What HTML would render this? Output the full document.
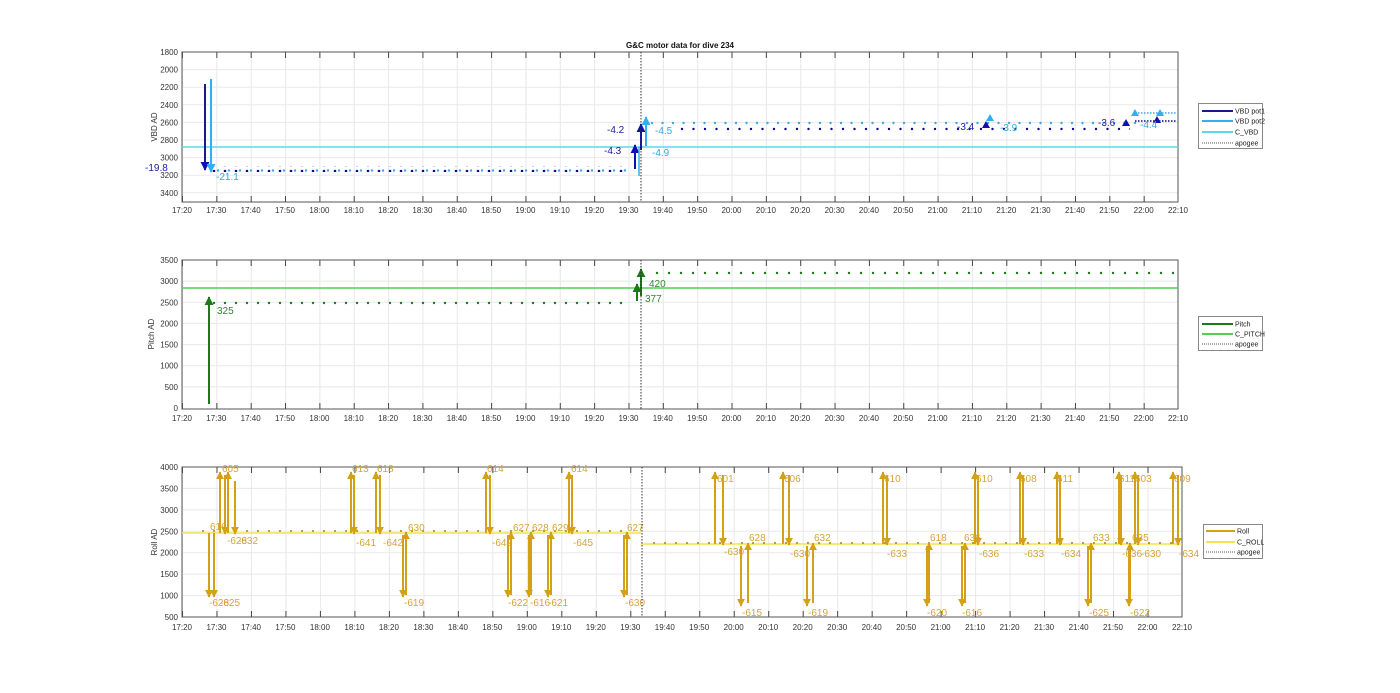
<!DOCTYPE html>
<html><head><meta charset="utf-8"><style>
html,body{margin:0;padding:0;background:#fff;}
svg{display:block;font-family:"Liberation Sans",sans-serif;}
.t{font-size:8px;fill:#333;}
.yl{font-size:8px;fill:#333;text-anchor:end;}
.xl{font-size:8px;fill:#333;text-anchor:middle;}
.g{font-size:10px;fill:#d4a43a;}
</style></head><body>
<svg width="1400" height="693" viewBox="0 0 1400 693">
<defs>
<pattern id="vg" x="182" y="0" width="34.345" height="10" patternUnits="userSpaceOnUse"><line x1="0.5" y1="0" x2="0.5" y2="10" stroke="#e8e8e8" stroke-width="1"/></pattern>
<pattern id="vt" x="182" y="0" width="34.345" height="10" patternUnits="userSpaceOnUse"><line x1="0.5" y1="0" x2="0.5" y2="10" stroke="#444" stroke-width="1"/></pattern>
<pattern id="vgb" x="182" y="0" width="34.483" height="10" patternUnits="userSpaceOnUse"><line x1="0.5" y1="0" x2="0.5" y2="10" stroke="#e8e8e8" stroke-width="1"/></pattern>
<pattern id="vtb" x="182" y="0" width="34.483" height="10" patternUnits="userSpaceOnUse"><line x1="0.5" y1="0" x2="0.5" y2="10" stroke="#444" stroke-width="1"/></pattern>
<pattern id="dn" x="212" y="0" width="11" height="6" patternUnits="userSpaceOnUse"><circle cx="2" cy="3" r="1.3" fill="#0a0a8a"/><circle cx="6" cy="2.5" r="1.2" fill="#3aa8e8"/></pattern>
<pattern id="dn2" x="650" y="0" width="10.5" height="6" patternUnits="userSpaceOnUse"><circle cx="2" cy="3" r="1.2" fill="#3aa8e8"/></pattern>
<pattern id="dn3" x="680" y="0" width="11.5" height="6" patternUnits="userSpaceOnUse"><circle cx="2" cy="3" r="1.2" fill="#0a0a8a"/></pattern>
<pattern id="dg" x="212" y="0" width="11" height="6" patternUnits="userSpaceOnUse"><circle cx="2" cy="3" r="1.2" fill="#1a7a1a"/></pattern>
<pattern id="dg2" x="655" y="0" width="12" height="6" patternUnits="userSpaceOnUse"><circle cx="2" cy="3" r="1.2" fill="#1a7a1a"/></pattern>
<pattern id="dy" x="212" y="0" width="11" height="6" patternUnits="userSpaceOnUse"><circle cx="2" cy="3" r="1.1" fill="#b89030"/></pattern>
<marker id="mg" viewBox="0 0 10 10" refX="9" refY="5" markerWidth="4" markerHeight="4" orient="auto"><path d="M0,0L10,5L0,10z" fill="#d4a017"/></marker>
<marker id="mgr" viewBox="0 0 10 10" refX="9" refY="5" markerWidth="4.5" markerHeight="4.5" orient="auto"><path d="M0,0L10,5L0,10z" fill="#1a7a1a"/></marker>
<marker id="mb" viewBox="0 0 10 10" refX="9" refY="5" markerWidth="4.5" markerHeight="4.5" orient="auto"><path d="M0,0L10,5L0,10z" fill="#1010b0"/></marker>
<marker id="mc" viewBox="0 0 10 10" refX="9" refY="5" markerWidth="4.5" markerHeight="4.5" orient="auto"><path d="M0,0L10,5L0,10z" fill="#30b0f0"/></marker>
</defs>

<!-- ===== TOP PLOT ===== -->
<text x="680" y="48" font-size="8" font-weight="bold" text-anchor="middle" fill="#111">G&amp;C motor data for dive 234</text>
<rect x="182" y="52" width="996" height="150" fill="url(#vg)"/>
<g stroke="#e8e8e8"><line x1="182" x2="1178" y1="69.6" y2="69.6"/><line x1="182" x2="1178" y1="87.2" y2="87.2"/><line x1="182" x2="1178" y1="104.8" y2="104.8"/><line x1="182" x2="1178" y1="122.4" y2="122.4"/><line x1="182" x2="1178" y1="140" y2="140"/><line x1="182" x2="1178" y1="157.6" y2="157.6"/><line x1="182" x2="1178" y1="175.2" y2="175.2"/><line x1="182" x2="1178" y1="192.8" y2="192.8"/></g>
<rect x="182" y="52" width="996" height="6" fill="url(#vt)"/>
<rect x="182" y="196" width="996" height="6" fill="url(#vt)"/>
<rect x="182" y="52" width="996" height="150" fill="none" stroke="#555" stroke-width="1"/>
<g class="yl"><text x="178" y="55">1800</text><text x="178" y="72.6">2000</text><text x="178" y="90.2">2200</text><text x="178" y="107.8">2400</text><text x="178" y="125.4">2600</text><text x="178" y="143">2800</text><text x="178" y="160.6">3000</text><text x="178" y="178.2">3200</text><text x="178" y="195.8">3400</text></g>
<text class="t" transform="translate(157,127) rotate(-90)" text-anchor="middle">VBD AD</text>
<line x1="182" x2="1178" y1="147" y2="147" stroke="#5ad8e8" stroke-width="1.5"/>
<rect x="212" y="166" width="415" height="6" fill="url(#dn)"/>
<rect x="650" y="119" width="490" height="6" fill="url(#dn2)"/>
<rect x="680" y="125" width="450" height="6" fill="url(#dn3)"/>
<line x1="1135" x2="1176" y1="121" y2="121" stroke="#0a0a8a" stroke-width="1.5" stroke-dasharray="1.5 1.5"/>
<line x1="1135" x2="1176" y1="113" y2="113" stroke="#3aa8e8" stroke-width="1.5" stroke-dasharray="1.5 1.5"/>
<path d="M986,121l-4,7h8z" fill="#1010b0"/><path d="M990,114l-4,7h8z" fill="#30b0f0"/>
<path d="M1126,119l-4,7h8z" fill="#1010b0"/><path d="M1135,109l-4,7h8z" fill="#30b0f0"/><path d="M1160,109l-4,7h8z" fill="#30b0f0"/><path d="M1157,116l-4,7h8z" fill="#1010b0"/>
<line x1="205" y1="84" x2="205" y2="170" stroke="#1a1a90" stroke-width="2" marker-end="url(#mb)"/>
<line x1="211" y1="79" x2="211" y2="172" stroke="#30b0f0" stroke-width="2" marker-end="url(#mc)"/>
<line x1="635" y1="169" x2="635" y2="145" stroke="#1010b0" stroke-width="2" marker-end="url(#mb)"/>
<line x1="641" y1="150" x2="641" y2="124" stroke="#1010b0" stroke-width="2" marker-end="url(#mb)"/>
<line x1="639" y1="176" x2="639" y2="147" stroke="#30b0f0" stroke-width="1.5"/>
<line x1="646" y1="146" x2="646" y2="117" stroke="#30b0f0" stroke-width="2" marker-end="url(#mc)"/>
<g font-size="10"><text x="145" y="171" fill="#2020a0">-19.8</text><text x="216" y="180" fill="#30a8e0">-21.1</text><text x="604" y="154" fill="#2020a0">-4.3</text><text x="607" y="133" fill="#2020a0">-4.2</text><text x="655" y="134" fill="#30a8e0">-4.5</text><text x="652" y="156" fill="#30a8e0">-4.9</text><text x="957" y="130" fill="#2020a0">-3.4</text><text x="1000" y="131" fill="#30a8e0">-3.9</text><text x="1098" y="126" fill="#2020a0">-3.6</text><text x="1140" y="128" fill="#30a8e0">-4.4</text></g>
<g class="xl"><text x="182" y="213">17:20</text><text x="216.3" y="213">17:30</text><text x="250.7" y="213">17:40</text><text x="285" y="213">17:50</text><text x="319.4" y="213">18:00</text><text x="353.7" y="213">18:10</text><text x="388.1" y="213">18:20</text><text x="422.4" y="213">18:30</text><text x="456.8" y="213">18:40</text><text x="491.1" y="213">18:50</text><text x="525.4" y="213">19:00</text><text x="559.8" y="213">19:10</text><text x="594.1" y="213">19:20</text><text x="628.5" y="213">19:30</text><text x="662.8" y="213">19:40</text><text x="697.2" y="213">19:50</text><text x="731.5" y="213">20:00</text><text x="765.9" y="213">20:10</text><text x="800.2" y="213">20:20</text><text x="834.6" y="213">20:30</text><text x="868.9" y="213">20:40</text><text x="903.2" y="213">20:50</text><text x="937.6" y="213">21:00</text><text x="971.9" y="213">21:10</text><text x="1006.3" y="213">21:20</text><text x="1040.6" y="213">21:30</text><text x="1075" y="213">21:40</text><text x="1109.3" y="213">21:50</text><text x="1143.7" y="213">22:00</text><text x="1178" y="213">22:10</text></g>
<line x1="641" x2="641" y1="52" y2="202" stroke="#333" stroke-dasharray="1.5 1.5"/>
<rect x="1198.5" y="103.5" width="64" height="45" fill="#fff" stroke="#888"/>
<g stroke-width="2"><line x1="1202" x2="1233" y1="111" y2="111" stroke="#1a1a90"/><line x1="1202" x2="1233" y1="121" y2="121" stroke="#30b0f0"/><line x1="1202" x2="1233" y1="132" y2="132" stroke="#5ad8e8"/></g>
<line x1="1202" x2="1233" y1="143" y2="143" stroke="#555" stroke-dasharray="1 1"/>
<g font-size="7" fill="#222"><text x="1235" y="113.5">VBD pot1</text><text x="1235" y="123.5">VBD pot2</text><text x="1235" y="134.5">C_VBD</text><text x="1235" y="145.5">apogee</text></g>

<!-- ===== MIDDLE PLOT ===== -->
<rect x="182" y="260" width="996" height="149" fill="url(#vg)"/>
<g stroke="#e8e8e8"><line x1="182" x2="1178" y1="281.1" y2="281.1"/><line x1="182" x2="1178" y1="302.3" y2="302.3"/><line x1="182" x2="1178" y1="323.4" y2="323.4"/><line x1="182" x2="1178" y1="344.6" y2="344.6"/><line x1="182" x2="1178" y1="365.7" y2="365.7"/><line x1="182" x2="1178" y1="386.9" y2="386.9"/></g>
<rect x="182" y="260" width="996" height="6" fill="url(#vt)"/>
<rect x="182" y="403" width="996" height="6" fill="url(#vt)"/>
<rect x="182" y="260" width="996" height="149" fill="none" stroke="#555"/>
<g class="yl"><text x="178" y="263">3500</text><text x="178" y="284.1">3000</text><text x="178" y="305.3">2500</text><text x="178" y="326.4">2000</text><text x="178" y="347.6">1500</text><text x="178" y="368.7">1000</text><text x="178" y="389.9">500</text><text x="178" y="411">0</text></g>
<text class="t" transform="translate(154,334) rotate(-90)" text-anchor="middle">Pitch AD</text>
<line x1="182" x2="1178" y1="288" y2="288" stroke="#50d050" stroke-width="1.5"/>
<rect x="212" y="299" width="415" height="6" fill="url(#dg)"/>
<rect x="655" y="271" width="520" height="6" fill="url(#dg2)"/>
<line x1="209" y1="404" x2="209" y2="297" stroke="#1a7a1a" stroke-width="2" marker-end="url(#mgr)"/>
<line x1="637" y1="301" x2="637" y2="284" stroke="#1a7a1a" stroke-width="2" marker-end="url(#mgr)"/>
<line x1="641" y1="296" x2="641" y2="269" stroke="#1a7a1a" stroke-width="2" marker-end="url(#mgr)"/>
<g font-size="10" fill="#2a8a2a"><text x="217" y="314">325</text><text x="645" y="302">377</text><text x="649" y="287">420</text></g>
<g class="xl"><text x="182" y="421">17:20</text><text x="216.3" y="421">17:30</text><text x="250.7" y="421">17:40</text><text x="285" y="421">17:50</text><text x="319.4" y="421">18:00</text><text x="353.7" y="421">18:10</text><text x="388.1" y="421">18:20</text><text x="422.4" y="421">18:30</text><text x="456.8" y="421">18:40</text><text x="491.1" y="421">18:50</text><text x="525.4" y="421">19:00</text><text x="559.8" y="421">19:10</text><text x="594.1" y="421">19:20</text><text x="628.5" y="421">19:30</text><text x="662.8" y="421">19:40</text><text x="697.2" y="421">19:50</text><text x="731.5" y="421">20:00</text><text x="765.9" y="421">20:10</text><text x="800.2" y="421">20:20</text><text x="834.6" y="421">20:30</text><text x="868.9" y="421">20:40</text><text x="903.2" y="421">20:50</text><text x="937.6" y="421">21:00</text><text x="971.9" y="421">21:10</text><text x="1006.3" y="421">21:20</text><text x="1040.6" y="421">21:30</text><text x="1075" y="421">21:40</text><text x="1109.3" y="421">21:50</text><text x="1143.7" y="421">22:00</text><text x="1178" y="421">22:10</text></g>
<line x1="641" x2="641" y1="260" y2="409" stroke="#333" stroke-dasharray="1.5 1.5"/>
<rect x="1198.5" y="316.5" width="64" height="34" fill="#fff" stroke="#888"/>
<line x1="1202" x2="1233" y1="324" y2="324" stroke="#1a7a1a" stroke-width="2"/><line x1="1202" x2="1233" y1="334" y2="334" stroke="#50d050" stroke-width="2"/><line x1="1202" x2="1233" y1="344" y2="344" stroke="#555" stroke-dasharray="1 1"/>
<g font-size="7" fill="#222"><text x="1235" y="326.5">Pitch</text><text x="1235" y="336.5">C_PITCH</text><text x="1235" y="346.5">apogee</text></g>

<!-- ===== BOTTOM PLOT ===== -->
<rect x="182" y="467" width="1000" height="150" fill="url(#vgb)"/>
<g stroke="#e8e8e8"><line x1="182" x2="1182" y1="488.4" y2="488.4"/><line x1="182" x2="1182" y1="509.9" y2="509.9"/><line x1="182" x2="1182" y1="531.3" y2="531.3"/><line x1="182" x2="1182" y1="552.7" y2="552.7"/><line x1="182" x2="1182" y1="574.1" y2="574.1"/><line x1="182" x2="1182" y1="595.6" y2="595.6"/></g>
<rect x="182" y="467" width="1000" height="6" fill="url(#vtb)"/>
<rect x="182" y="611" width="1000" height="6" fill="url(#vtb)"/>
<rect x="182" y="467" width="1000" height="150" fill="none" stroke="#555"/>
<g class="yl"><text x="178" y="470">4000</text><text x="178" y="491.4">3500</text><text x="178" y="512.9">3000</text><text x="178" y="534.3">2500</text><text x="178" y="555.7">2000</text><text x="178" y="577.1">1500</text><text x="178" y="598.6">1000</text><text x="178" y="620">500</text></g>
<text class="t" transform="translate(157,542) rotate(-90)" text-anchor="middle">Roll AD</text>
<line x1="182" x2="641" y1="533" y2="533" stroke="#f4e44a" stroke-width="1.5"/>
<line x1="641" x2="1182" y1="544" y2="544" stroke="#f4e44a" stroke-width="1.5"/>
<rect x="200" y="530" width="427" height="6" fill="url(#dy)"/>
<rect x="650" y="541" width="525" height="6" fill="url(#dy)"/>
<g stroke="#d4a017" stroke-width="2" marker-end="url(#mg)">
<line x1="209" y1="533" x2="209" y2="597"/><line x1="214" y1="533" x2="214" y2="597"/>
<line x1="220" y1="533" x2="220" y2="472"/><line x1="228" y1="533" x2="228" y2="472"/>
<line x1="225" y1="475" x2="225" y2="534"/><line x1="235" y1="481" x2="235" y2="534"/>
<line x1="351" y1="533" x2="351" y2="472"/><line x1="354" y1="475" x2="354" y2="534"/>
<line x1="376" y1="533" x2="376" y2="472"/><line x1="380" y1="475" x2="380" y2="534"/>
<line x1="403" y1="535" x2="403" y2="597"/><line x1="406" y1="595" x2="406" y2="532"/>
<line x1="486" y1="533" x2="486" y2="472"/><line x1="490" y1="475" x2="490" y2="534"/>
<line x1="508" y1="535" x2="508" y2="597"/><line x1="511" y1="595" x2="511" y2="532"/>
<line x1="529" y1="535" x2="529" y2="597"/><line x1="531" y1="595" x2="531" y2="532"/>
<line x1="548" y1="535" x2="548" y2="597"/><line x1="551" y1="595" x2="551" y2="532"/>
<line x1="569" y1="533" x2="569" y2="472"/><line x1="572" y1="475" x2="572" y2="534"/>
<line x1="624" y1="535" x2="624" y2="597"/><line x1="627" y1="595" x2="627" y2="532"/>
<line x1="715" y1="544" x2="715" y2="472"/><line x1="723" y1="475" x2="723" y2="545"/>
<line x1="741" y1="546" x2="741" y2="606"/><line x1="748" y1="603" x2="748" y2="543"/>
<line x1="783" y1="544" x2="783" y2="472"/><line x1="789" y1="475" x2="789" y2="545"/>
<line x1="807" y1="546" x2="807" y2="606"/><line x1="813" y1="603" x2="813" y2="543"/>
<line x1="883" y1="544" x2="883" y2="472"/><line x1="887" y1="475" x2="887" y2="545"/>
<line x1="927" y1="546" x2="927" y2="606"/><line x1="929" y1="603" x2="929" y2="543"/>
<line x1="962" y1="546" x2="962" y2="606"/><line x1="965" y1="603" x2="965" y2="543"/>
<line x1="975" y1="544" x2="975" y2="472"/><line x1="978" y1="475" x2="978" y2="545"/>
<line x1="1020" y1="544" x2="1020" y2="472"/><line x1="1023" y1="475" x2="1023" y2="545"/>
<line x1="1057" y1="544" x2="1057" y2="472"/><line x1="1060" y1="475" x2="1060" y2="545"/>
<line x1="1088" y1="546" x2="1088" y2="606"/><line x1="1091" y1="603" x2="1091" y2="543"/>
<line x1="1119" y1="544" x2="1119" y2="472"/><line x1="1121" y1="475" x2="1121" y2="545"/>
<line x1="1129" y1="546" x2="1129" y2="606"/><line x1="1130" y1="603" x2="1130" y2="543"/>
<line x1="1135" y1="544" x2="1135" y2="472"/><line x1="1138" y1="475" x2="1138" y2="545"/>
<line x1="1173" y1="544" x2="1173" y2="472"/><line x1="1178" y1="475" x2="1178" y2="545"/>
</g>
<g class="g">
<text x="210" y="530">616</text><text x="222" y="472">605</text><text x="209" y="606">-628</text><text x="220" y="606">-625</text><text x="227" y="544">-628</text><text x="238" y="544">-632</text>
<text x="352" y="472">613</text><text x="356" y="546">-641</text><text x="377" y="472">618</text><text x="383" y="546">-642</text><text x="404" y="606">-619</text><text x="408" y="531">630</text>
<text x="487" y="472">614</text><text x="492" y="546">-642</text><text x="508" y="606">-622</text><text x="513" y="531">627</text><text x="530" y="606">-616</text><text x="532" y="531">628</text><text x="548" y="606">-621</text><text x="552" y="531">629</text><text x="571" y="472">614</text><text x="573" y="546">-645</text><text x="625" y="606">-630</text><text x="627" y="531">627</text>
<text x="717" y="482">601</text><text x="724" y="555">-630</text><text x="742" y="616">-615</text><text x="749" y="541">628</text><text x="784" y="482">606</text><text x="790" y="557">-630</text><text x="808" y="616">-619</text><text x="814" y="541">632</text>
<text x="884" y="482">610</text><text x="887" y="557">-633</text><text x="927" y="616">-620</text><text x="930" y="541">618</text><text x="962" y="616">-616</text><text x="964" y="541">636</text><text x="976" y="482">610</text><text x="979" y="557">-636</text>
<text x="1020" y="482">608</text><text x="1024" y="557">-633</text><text x="1057" y="482">611</text><text x="1061" y="557">-634</text><text x="1089" y="616">-625</text><text x="1093" y="541">633</text>
<text x="1119" y="482">611</text><text x="1122" y="557">-636</text><text x="1130" y="616">-622</text><text x="1132" y="541">635</text><text x="1135" y="482">603</text><text x="1141" y="557">-630</text><text x="1174" y="482">609</text><text x="1179" y="557">-634</text>
</g>
<g class="xl"><text x="182" y="630">17:20</text><text x="216.5" y="630">17:30</text><text x="251" y="630">17:40</text><text x="285.4" y="630">17:50</text><text x="319.9" y="630">18:00</text><text x="354.4" y="630">18:10</text><text x="388.9" y="630">18:20</text><text x="423.4" y="630">18:30</text><text x="457.9" y="630">18:40</text><text x="492.3" y="630">18:50</text><text x="526.8" y="630">19:00</text><text x="561.3" y="630">19:10</text><text x="595.8" y="630">19:20</text><text x="630.3" y="630">19:30</text><text x="664.8" y="630">19:40</text><text x="699.2" y="630">19:50</text><text x="733.7" y="630">20:00</text><text x="768.2" y="630">20:10</text><text x="802.7" y="630">20:20</text><text x="837.2" y="630">20:30</text><text x="871.7" y="630">20:40</text><text x="906.1" y="630">20:50</text><text x="940.6" y="630">21:00</text><text x="975.1" y="630">21:10</text><text x="1009.6" y="630">21:20</text><text x="1044.1" y="630">21:30</text><text x="1078.6" y="630">21:40</text><text x="1113" y="630">21:50</text><text x="1147.5" y="630">22:00</text><text x="1182" y="630">22:10</text></g>
<line x1="642" x2="642" y1="467" y2="617" stroke="#333" stroke-dasharray="1.5 1.5"/>
<rect x="1203.5" y="524.5" width="59" height="34" fill="#fff" stroke="#888"/>
<line x1="1206" x2="1235" y1="531" y2="531" stroke="#d4a017" stroke-width="2"/><line x1="1206" x2="1235" y1="542" y2="542" stroke="#f4e44a" stroke-width="2"/><line x1="1206" x2="1235" y1="552" y2="552" stroke="#555" stroke-dasharray="1 1"/>
<g font-size="7" fill="#222"><text x="1237" y="533.5">Roll</text><text x="1237" y="544.5">C_ROLL</text><text x="1237" y="554.5">apogee</text></g>
</svg>
</body></html>
